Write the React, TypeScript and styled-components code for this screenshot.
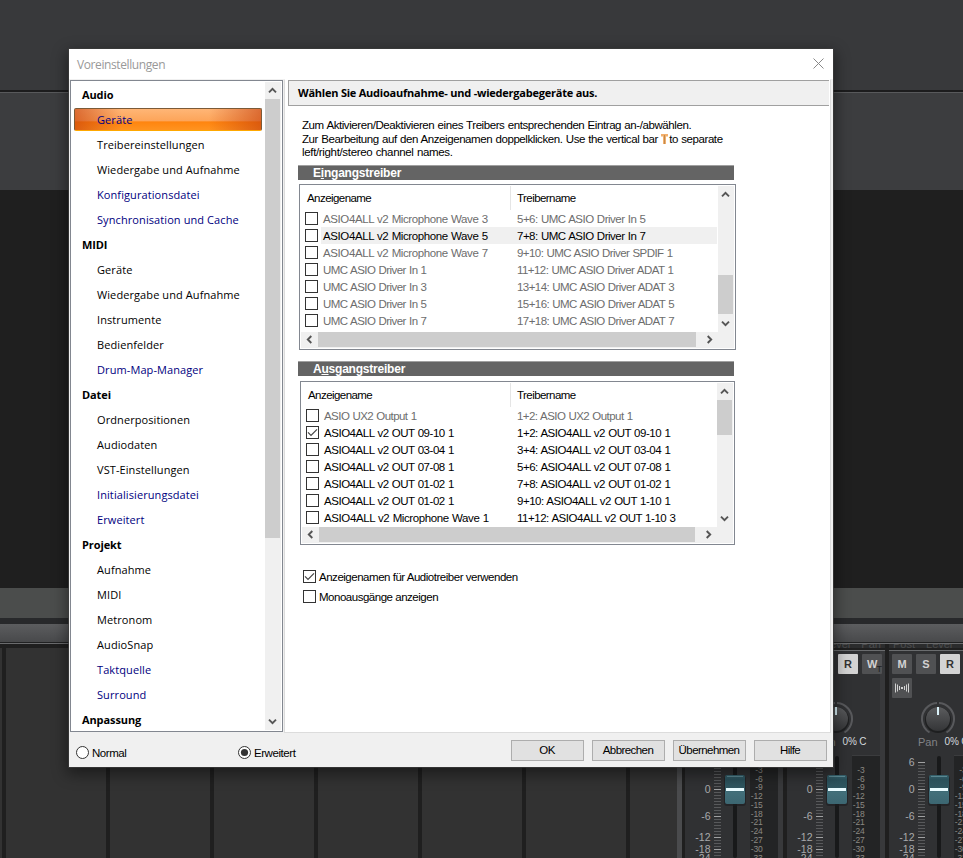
import React from 'react';
import styled, { createGlobalStyle, css } from 'styled-components';

const sans = '"Liberation Sans", Arial, sans-serif';
const ui = '"Open Sans", "Segoe UI", sans-serif';

const GlobalStyle = createGlobalStyle`
  * { box-sizing: border-box; }
  html, body { margin: 0; padding: 0; background: #1f1f1f; }
`;

/* ---------- Workspace behind the dialog ---------- */

const Desktop = styled.main`
  position: relative;
  width: 963px;
  height: 858px;
  overflow: hidden;
  display: flex;
  flex-direction: column;
  background: #1f1f1f;
  font: 11px ${sans};
`;

const Band = styled.div<{ $h: number; $bg: string }>`
  flex: none;
  height: ${p => p.$h}px;
  background: ${p => p.$bg};
`;

const Mixer = styled.section`
  flex: 1;
  display: flex;
  background: #1f1f1f;
  overflow: hidden;
`;

const EmptyTracks = styled.div`
  flex: none;
  width: 677px;
  margin-top: 4px;
  background: repeating-linear-gradient(90deg, #323232 0 2px, #1f1f1f 2px 6px, #323232 6px 104px);
`;

const Rail = styled.div`
  flex: none;
  width: 5px;
  margin-top: 4px;
  background: #4a4b4d;
`;

const Channel = styled.div`
  flex: none;
  width: 102px;
  padding-left: 4px;
  margin-left: 0;
  overflow: hidden;
  &:first-of-type { margin-left: -1px; }
`;

const Strips = styled.div`
  flex: none;
  display: flex;
  width: 408px;
`;

const SendLabels = styled.div`
  height: 4px;
  margin-bottom: 2px;
  padding-left: 4px;
  display: flex;
  gap: 11px;
  align-items: flex-end;
  overflow: hidden;
  background: #2b2c2d;
  color: #4b4c4e;
  line-height: 7px;
`;

const ChannelBody = styled.div`
  width: 98px;
  height: 208px;
  border-top: 1px solid #6a6c6e;
  background: linear-gradient(90deg, #303133 0 93px, #38393b 93px);
`;

const ButtonRow = styled.div`
  display: flex;
  gap: 4px;
  padding: 3px 0 0 3px;
  & + & { padding-top: 4px; }
`;

const StripButton = styled.span<{ $on?: boolean }>`
  flex: none;
  display: flex;
  align-items: center;
  justify-content: center;
  width: 20px;
  height: 20px;
  border-radius: 1px;
  background: ${p => (p.$on ? '#d3d3d3' : '#505153')};
  color: ${p => (p.$on ? '#333' : '#d2d2d2')};
  font: bold 11px ${sans};
`;

const Sub = styled.sub`
  font: 9px ${sans};
  color: #222;
  margin: 9px -5px 0 -1px;
`;

const PanKnob = styled.svg`
  display: block;
  margin: 4px 0 0 31px;
`;

const PanRow = styled.div`
  display: flex;
  align-items: center;
  gap: 7px;
  height: 13px;
  margin: -1px 0 7px 29px;
  color: #808286;
  white-space: nowrap;
`;

const PanValue = styled.span`
  color: #d6dade;
  font-size: 10px;
  letter-spacing: -.2px;
`;

const FaderDrawing = styled.svg`
  display: block;
  font-family: ${sans};
`;

const scale: [string, number][] = [['6', 7.5], ['0', 34.5], ['-6', 61.5], ['-12', 82.5], ['-18', 94.5], ['-24', 103.5]];
const meter: [string, number][] = [
  ['-3', 15], ['-6', 24], ['-9', 32], ['-12', 41], ['-15', 50], ['-18', 59],
  ['-21', 67], ['-24', 76], ['-27', 85], ['-30', 94], ['-33', 103],
];

function Fader() {
  const ticks = Array.from({ length: 33 }, (_, i) => 7 + i * 3);
  const major = [7, 34, 61, 82, 94];
  return (
    <FaderDrawing width="98" height="103" viewBox="0 0 98 103">
      <defs>
        <linearGradient id="cap" x1="0" y1="0" x2="0" y2="1">
          <stop offset="0" stopColor="#35616c" />
          <stop offset=".15" stopColor="#2a505a" />
          <stop offset=".45" stopColor="#2f5761" />
          <stop offset=".6" stopColor="#426f7a" />
          <stop offset="1" stopColor="#3c6671" />
        </linearGradient>
      </defs>
      <rect x="65" width="28" height="103" fill="#232425" />
      <rect x="65" width="28" height="1" fill="#3b3c3e" />
      {ticks.map(y => (
        <rect key={y} x="29" y={y} width="7" height="1" fill={major.includes(y) ? '#a0a1a2' : '#58595b'} />
      ))}
      {scale.map(([t, y]) => (
        <text key={t} x="25.5" y={y + 3.5} fontSize="10.5" textAnchor="end" fill="#a8a9ab">{t}</text>
      ))}
      {meter.map(([t, y]) => (
        <text key={t} x="77.5" y={y + 3} fontSize="8.5" letterSpacing="-.2" textAnchor="end" fill="#8b8983">{t}</text>
      ))}
      <rect x="48" y="1" width="4" height="102" rx="2" fill="#18191a" />
      <rect x="39" y="21" width="22" height="30" rx="3" fill="#1c1d1f" opacity=".6" />
      <rect x="40" y="20" width="20" height="29" rx="2" fill="url(#cap)" />
      <rect x="42" y="21" width="16" height="1" fill="#5a8791" />
      <rect x="41" y="33" width="18" height="3" fill="#e8fbff" />
    </FaderDrawing>
  );
}

function InterleaveIcon() {
  return (
    <svg width="16" height="12" viewBox="0 0 16 12" stroke="#d2d2d2" strokeWidth="1">
      <path d="M1.5 1.5v9M3.5 2.5v7M5.5 4v4M10.5 4v4M12.5 2.5v7M14.5 1.5v9" fill="none" />
      <path d="M7 5h2v2H7z" fill="#d2d2d2" stroke="none" />
    </svg>
  );
}

function ChannelStrip() {
  return (
    <Channel>
      <SendLabels><span>Post</span><span>Level</span><span>Pan</span></SendLabels>
      <ChannelBody>
        <ButtonRow>
          <StripButton>M</StripButton>
          <StripButton>S</StripButton>
          <StripButton $on>R</StripButton>
          <StripButton>W<Sub>T</Sub></StripButton>
        </ButtonRow>
        <ButtonRow>
          <StripButton><InterleaveIcon /></StripButton>
        </ButtonRow>
        <PanKnob width="36" height="34" viewBox="0 0 36 34">
          <defs>
            <linearGradient id="knob" x1="0" y1="0" x2="0" y2="1">
              <stop offset="0" stopColor="#5b5c5e" />
              <stop offset="1" stopColor="#343537" />
            </linearGradient>
          </defs>
          <path d="M9.5 30.5A16 16 0 1 1 26.5 30.5" fill="none" stroke="#58595c" strokeWidth="2" />
          <circle cx="18" cy="18" r="13" fill="#1e1f20" />
          <circle cx="18" cy="17" r="12" fill="url(#knob)" />
          <rect x="17" y="0" width="2" height="3" fill="#303133" />
          <rect x="17" y="5" width="2" height="8" fill="#d9f1f8" />
        </PanKnob>
        <PanRow>Pan <PanValue>0% C</PanValue></PanRow>
        <Fader />
      </ChannelBody>
    </Channel>
  );
}

/* ---------- Dialog ---------- */

const Dialog = styled.div`
  position: absolute;
  left: 69px;
  top: 49px;
  width: 764px;
  height: 718px;
  display: flex;
  flex-direction: column;
  background: #f0f0f0;
  box-shadow: 0 0 0 1px rgba(60, 60, 60, .75), 0 5px 14px 2px rgba(0, 0, 0, .45);
  font: 11.5px ${sans};
  letter-spacing: -.44px;
  color: #000;
  white-space: nowrap;
`;

const TitleBar = styled.header`
  flex: none;
  height: 30px;
  padding: 0 9px 0 8px;
  display: flex;
  align-items: center;
  justify-content: space-between;
  background: #fff;
  color: #999;
  font: 12px ${ui};
  letter-spacing: -.4px;
`;

const CloseIcon = styled.svg`
  margin-bottom: 2px;
`;

const Content = styled.div`
  flex: none;
  height: 654px;
  display: flex;
  padding-left: 1px;
`;

const Tree = styled.nav`
  width: 213px;
  height: 652px;
  margin: 1px 1px 0 0;
  padding: 1px;
  border: 1px solid #828790;
  background: #fff;
  display: flex;
`;

const TreeItems = styled.div`
  width: 193px;
  height: 648px;
  overflow: hidden;
  font: 11px/25px ${ui};
  letter-spacing: .09px;
`;

const TreeItem = styled.div<{ $kind: 'group' | 'item' | 'link' | 'selected' }>`
  height: 25px;
  padding-left: ${p => (p.$kind === 'group' ? 10 : 25)}px;
  color: ${p => (p.$kind === 'link' || p.$kind === 'selected' ? '#000080' : '#000')};
  ${p => p.$kind === 'group' && css`
    font-weight: bold;
    letter-spacing: -.1px;
  `}
  ${p => p.$kind === 'selected' && css`
    height: 23px;
    line-height: 21px;
    margin: 1px 3px 1px 2px;
    padding-left: 22px;
    width: 188px;
    border: solid #7b5a38;
    border-width: 1px 1px 0;
    border-radius: 2px;
    border-bottom: 1px solid #ffa800;
    background:
      linear-gradient(90deg, rgba(196, 60, 10, .6), rgba(196, 60, 10, 0) 25%, rgba(196, 60, 10, 0) 72%, rgba(196, 60, 10, .6)),
      linear-gradient(#ffb676, #fda55a 55%, #ff850f 62%, #ff9320);
  `}
`;

const Pane = styled.section`
  width: 547px;
  height: 654px;
  border: 1px solid #dcdcdc;
  border-top-color: #fff;
  background: #fff;
`;

const PaneHeading = styled.h1`
  margin: 0 0 12px 3px;
  width: 541px;
  height: 26px;
  padding-left: 9px;
  border: 1px solid #a0a0a0;
  border-right: 0;
  background: #f0f0f0;
  font: bold 11px/24px ${ui};
  letter-spacing: -.225px;
`;

const Instructions = styled.p`
  margin: 0 0 5px 17px;
  height: 42px;
  line-height: 14px;
  letter-spacing: -.42px;
  word-spacing: .5px;
`;

const InstructionLine = styled.span<{ $last?: boolean }>`
  display: block;
  ${p => p.$last && css`line-height: 13px; letter-spacing: -.34px;`}
`;

const Marker = styled.svg`
  width: 7px;
  height: 10px;
  margin: 0 1px -1px 0;
`;

const SectionBar = styled.h2<{ $before?: number }>`
  margin: ${p => p.$before || 0}px 0 0 13px;
  width: 436px;
  height: 15px;
  padding-left: 15px;
  border-top: 1px solid #a0a0a0;
  background: #646464;
  color: #fff;
  font: bold 12px/15px ${sans};
  letter-spacing: -.22px;
`;

const ListBox = styled.div<{ $x: number; $y: number; $w: number; $h: number }>`
  display: grid;
  grid-template-columns: 1fr 16px;
  grid-template-rows: 1fr 16px;
  margin: ${p => p.$y}px 0 0 ${p => p.$x}px;
  width: ${p => p.$w}px;
  height: ${p => p.$h}px;
  padding: 1px;
  border: 1px solid #828790;
`;

const ListBody = styled.div`
  overflow: hidden;
`;

const ListRow = styled.div<{ $second: number; $dim?: boolean; $active?: boolean }>`
  display: grid;
  grid-template-columns: 16px ${p => p.$second - 20}px 1fr;
  height: 17px;
  align-items: center;
  padding-left: 4px;
  word-spacing: .5px;
  color: ${p => (p.$dim ? '#6d6d6d' : '#000')};
  ${p => p.$active && css`background: linear-gradient(90deg, #fff 20px, #f0f0f0 20px 416px, #fff 416px);`}
`;

const ListHeader = styled.div<{ $second: number }>`
  display: grid;
  grid-template-columns: ${p => p.$second - 7}px 1fr;
  height: 24px;
  line-height: 24px;
  letter-spacing: -.56px;
`;

const HeaderCell = styled.span`
  padding-left: 6px;
  & + & { border-left: 1px solid #e5e5e5; }
`;

const Cell = styled.span<{ $track: number }>`
  padding-left: 2px;
  letter-spacing: ${p => p.$track}px;
  & + & { padding-left: 0; }
`;

const Box = styled.svg`
  flex: none;
  display: block;
  width: 13px;
  height: 13px;
`;

function CheckBox({ checked }: { checked?: boolean }) {
  return (
    <Box viewBox="0 0 13 13">
      <rect x=".5" y=".5" width="12" height="12" fill="#fff" stroke="#333" />
      {checked && <path d="M2 6.3l3 3 6-6" fill="none" stroke="#444" strokeWidth="1.2" />}
    </Box>
  );
}

const Bar = styled.div<{ $horizontal?: boolean }>`
  display: flex;
  flex-direction: ${p => (p.$horizontal ? 'row' : 'column')};
  width: ${p => (p.$horizontal ? 'auto' : '16px')};
  background: #f0f0f0;
`;

const ArrowButton = styled.span<{ $turn: number; $end?: boolean }>`
  flex: none;
  display: flex;
  align-items: center;
  justify-content: center;
  width: ${p => (p.$turn % 180 ? 17 : 15)}px;
  height: ${p => (p.$turn % 180 ? 15 : 17)}px;
  ${p => p.$end && (p.$turn % 180 ? css`margin-left: auto;` : css`margin-top: auto;`)}
  svg { transform: rotate(${p => p.$turn}deg); }
`;

const Thumb = styled.span<{ $start: number; $length: number; $horizontal?: boolean }>`
  flex: none;
  background: #cdcdcd;
  ${p => p.$horizontal
    ? css`width: ${p.$length}px; height: 15px; margin-left: ${p.$start}px;`
    : css`height: ${p.$length}px; width: 15px; margin-top: ${p.$start}px;`}
`;

function Arrow(props: { turn: number; end?: boolean }) {
  return (
    <ArrowButton $turn={props.turn} $end={props.end}>
      <svg width="9" height="9" viewBox="0 0 9 9">
        <path d="M1 6.3l3.5-3.5L8 6.3" fill="none" stroke="#555" strokeWidth="1.9" />
      </svg>
    </ArrowButton>
  );
}

function ScrollBar({ start, length, horizontal }: { start: number; length: number; horizontal?: boolean }) {
  return (
    <Bar $horizontal={horizontal}>
      <Arrow turn={horizontal ? 270 : 0} />
      <Thumb $start={start} $length={length} $horizontal={horizontal} />
      <Arrow turn={horizontal ? 90 : 180} end />
    </Bar>
  );
}

const Corner = styled.div`
  background: #f0f0f0;
`;

type Driver = { name: string; driver: string; dim?: boolean; active?: boolean; checked?: boolean };

interface DriverListProps {
  rows: Driver[];
  second: number;
  box: [number, number, number, number];
  vertical: [number, number];
  horizontal: number;
}

const track = (text: string) =>
  /^UMC/.test(text) ? -0.55
    : /UMC ASIO Driver In/.test(text) ? -0.5
    : /UMC|UX2/.test(text) ? -0.55
    : /Microphone/.test(text) ? -0.4 : -0.47;

function DriverList({ rows, second, box, vertical, horizontal }: DriverListProps) {
  const [x, y, w, h] = box;
  return (
    <ListBox $x={x} $y={y} $w={w} $h={h}>
      <ListBody>
        <ListHeader $second={second}>
          <HeaderCell>Anzeigename</HeaderCell>
          <HeaderCell>Treibername</HeaderCell>
        </ListHeader>
        {rows.map(r => (
          <ListRow key={r.driver} $second={second} $dim={r.dim} $active={r.active}>
            <CheckBox checked={r.checked} />
            <Cell $track={track(r.name)}>{r.name}</Cell>
            <Cell $track={track(r.driver)}>{r.driver}</Cell>
          </ListRow>
        ))}
      </ListBody>
      <ScrollBar start={vertical[0]} length={vertical[1]} />
      <ScrollBar horizontal start={0} length={horizontal} />
      <Corner />
    </ListBox>
  );
}

const Options = styled.div`
  display: flex;
  flex-direction: column;
  gap: 7px;
  margin: 25px 0 0 18px;
`;

const Option = styled.label`
  display: flex;
  align-items: center;
  gap: 3px;
  height: 13px;
  letter-spacing: -.48px;
`;

const Footer = styled.footer`
  flex: 1;
  display: flex;
  align-items: center;
  padding: 3px 6px 0 7px;
`;

const RadioOption = styled.label<{ $w: number }>`
  width: ${p => p.$w}px;
  display: flex;
  align-items: center;
  gap: 3px;
  padding-top: 2px;
`;

function Radio({ checked }: { checked?: boolean }) {
  return (
    <Box viewBox="0 0 13 13">
      <circle cx="6.5" cy="6.5" r="6" fill="#fff" stroke="#333" />
      {checked && <circle cx="6.5" cy="6.5" r="3.6" fill="#333" />}
    </Box>
  );
}

const Buttons = styled.div`
  display: flex;
  gap: 8px;
  margin-left: auto;
  padding-bottom: 2px;
`;

const PushButton = styled.button`
  width: 73px;
  height: 21px;
  padding: 0 1px 0 0;
  border: 1px solid #adadad;
  background: #e1e1e1;
  color: #000;
  font: 11.5px/19px ${sans};
  letter-spacing: -.56px;
`;

const tree: [string, 'group' | 'item' | 'link' | 'selected'][] = [
  ['Audio', 'group'], ['Geräte', 'selected'], ['Treibereinstellungen', 'item'], ['Wiedergabe und Aufnahme', 'item'],
  ['Konfigurationsdatei', 'link'], ['Synchronisation und Cache', 'link'],
  ['MIDI', 'group'], ['Geräte', 'item'], ['Wiedergabe und Aufnahme', 'item'], ['Instrumente', 'item'],
  ['Bedienfelder', 'item'], ['Drum-Map-Manager', 'link'],
  ['Datei', 'group'], ['Ordnerpositionen', 'item'], ['Audiodaten', 'item'], ['VST-Einstellungen', 'item'],
  ['Initialisierungsdatei', 'link'], ['Erweitert', 'link'],
  ['Projekt', 'group'], ['Aufnahme', 'item'], ['MIDI', 'item'], ['Metronom', 'item'], ['AudioSnap', 'item'],
  ['Taktquelle', 'link'], ['Surround', 'link'], ['Anpassung', 'group'],
];

const inputs: Driver[] = [
  { name: 'ASIO4ALL v2 Microphone Wave 3', driver: '5+6: UMC ASIO Driver In 5', dim: true },
  { name: 'ASIO4ALL v2 Microphone Wave 5', driver: '7+8: UMC ASIO Driver In 7', active: true },
  { name: 'ASIO4ALL v2 Microphone Wave 7', driver: '9+10: UMC ASIO Driver SPDIF 1', dim: true },
  { name: 'UMC ASIO Driver In 1', driver: '11+12: UMC ASIO Driver ADAT 1', dim: true },
  { name: 'UMC ASIO Driver In 3', driver: '13+14: UMC ASIO Driver ADAT 3', dim: true },
  { name: 'UMC ASIO Driver In 5', driver: '15+16: UMC ASIO Driver ADAT 5', dim: true },
  { name: 'UMC ASIO Driver In 7', driver: '17+18: UMC ASIO Driver ADAT 7', dim: true },
];

const outputs: Driver[] = [
  { name: 'ASIO UX2 Output 1', driver: '1+2: ASIO UX2 Output 1', dim: true },
  { name: 'ASIO4ALL v2 OUT 09-10 1', driver: '1+2: ASIO4ALL v2 OUT 09-10 1', checked: true },
  { name: 'ASIO4ALL v2 OUT 03-04 1', driver: '3+4: ASIO4ALL v2 OUT 03-04 1' },
  { name: 'ASIO4ALL v2 OUT 07-08 1', driver: '5+6: ASIO4ALL v2 OUT 07-08 1' },
  { name: 'ASIO4ALL v2 OUT 01-02 1', driver: '7+8: ASIO4ALL v2 OUT 01-02 1' },
  { name: 'ASIO4ALL v2 OUT 01-02 1', driver: '9+10: ASIO4ALL v2 OUT 1-10 1' },
  { name: 'ASIO4ALL v2 Microphone Wave 1', driver: '11+12: ASIO4ALL v2 OUT 1-10 3' },
];

export default function App() {
  return (
    <Desktop>
      <GlobalStyle />
      <Band $h={90} $bg="#38393b" />
      <Band $h={2} $bg="#1c1c1d" />
      <Band $h={1} $bg="#58595b" />
      <Band $h={97} $bg="#3c3d3f" />
      <Band $h={398} $bg="#1f1f1f" />
      <Band $h={30} $bg="#4b4d4c" />
      <Band $h={6} $bg="#28292b" />
      <Band $h={18} $bg="linear-gradient(#5c5d5f, #48494b)" />
      <Band $h={1} $bg="#202122" />
      <Band $h={1} $bg="#6a6b6d" />
      <Mixer>
        <EmptyTracks />
        <Rail />
        <Strips>
          <ChannelStrip />
          <ChannelStrip />
          <ChannelStrip />
        </Strips>
      </Mixer>

      <Dialog>
        <TitleBar>
          Voreinstellungen
          <CloseIcon width="11" height="11" viewBox="0 0 11 11">
            <path d="M.5.5l10 10M10.5.5l-10 10" stroke="#888" strokeWidth="1" />
          </CloseIcon>
        </TitleBar>
        <Content>
          <Tree>
            <TreeItems>
              {tree.map(([label, kind], i) => <TreeItem key={i} $kind={kind}>{label}</TreeItem>)}
            </TreeItems>
            <ScrollBar start={0} length={439} />
          </Tree>
          <Pane>
            <PaneHeading>Wählen Sie Audioaufnahme- und -wiedergabegeräte aus.</PaneHeading>
            <Instructions>
              <InstructionLine>Zum Aktivieren/Deaktivieren eines Treibers entsprechenden Eintrag an-/abwählen.</InstructionLine>
              <InstructionLine>
                Zur Bearbeitung auf den Anzeigenamen doppelklicken. Use the vertical bar{' '}
                <Marker viewBox="0 0 7 10">
                  <path d="M0 0h7v2.5H5V10H2V2.5H0z" fill="#f3b06c" />
                  <path d="M3.5 1v9" stroke="#c08a50" />
                </Marker>
                to separate
              </InstructionLine>
              <InstructionLine $last>left/right/stereo channel names.</InstructionLine>
            </Instructions>
            <SectionBar>E<u>i</u>ngangstreiber</SectionBar>
            <DriverList rows={inputs} second={216} box={[14, 4, 437, 166]} vertical={[72, 39]} horizontal={378} />
            <SectionBar $before={11}>A<u>u</u>sgangstreiber</SectionBar>
            <DriverList rows={outputs} second={215} box={[15, 5, 435, 164]} vertical={[0, 35]} horizontal={376} />
            <Options>
              <Option><CheckBox checked />Anzeigenamen für Audiotreiber verwenden</Option>
              <Option><CheckBox />Monoausgänge anzeigen</Option>
            </Options>
          </Pane>
        </Content>
        <Footer>
          <RadioOption $w={162}><Radio />Normal</RadioOption>
          <RadioOption $w={90}><Radio checked />Erweitert</RadioOption>
          <Buttons>
            <PushButton>OK</PushButton>
            <PushButton>Abbrechen</PushButton>
            <PushButton>Übernehmen</PushButton>
            <PushButton>Hilfe</PushButton>
          </Buttons>
        </Footer>
      </Dialog>
    </Desktop>
  );
}
